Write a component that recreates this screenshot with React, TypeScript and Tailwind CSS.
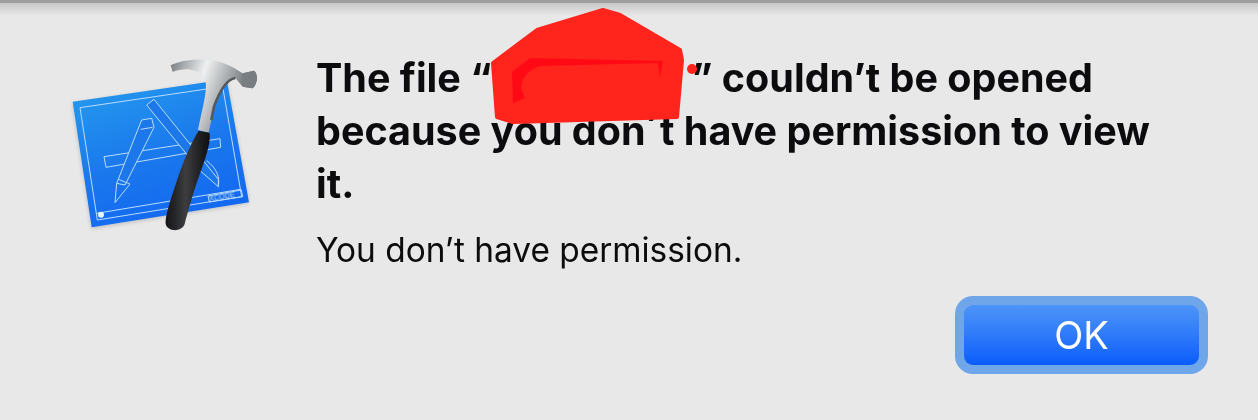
function XcodeIcon() {
  // traced in zoomed coordinates (3x)
  return (
    <svg width="230" height="200" viewBox="0 0 690 600" className="block">
      <defs>
        <linearGradient id="blue" x1="0.3" y1="0" x2="0.7" y2="1">
          <stop offset="0" stopColor="#2497ee" />
          <stop offset="0.5" stopColor="#1a78ec" />
          <stop offset="1" stopColor="#1266f2" />
        </linearGradient>
        <linearGradient id="steel" x1="0" y1="0" x2="1" y2="0.3">
          <stop offset="0" stopColor="#777c80" />
          <stop offset="0.4" stopColor="#eef0f1" />
          <stop offset="1" stopColor="#54595d" />
        </linearGradient>
        <linearGradient id="handle" x1="0" y1="0" x2="1" y2="0">
          <stop offset="0" stopColor="#141416" />
          <stop offset="0.45" stopColor="#3c3d40" />
          <stop offset="1" stopColor="#0d0d0f" />
        </linearGradient>
        <filter id="blur" x="-10%" y="-10%" width="120%" height="120%">
          <feGaussianBlur stdDeviation="1.5" />
        </filter>
        <filter id="shadow" x="-10%" y="-10%" width="120%" height="120%">
          <feGaussianBlur stdDeviation="6" />
        </filter>
      </defs>
      <polygon points="68,190 530,122 597,490 125,566" fill="#000" opacity="0.18" filter="url(#shadow)" />
      <polygon points="68,185 530,118 597,487 125,562" fill="url(#blue)" />
      <g fill="none" stroke="#b9dcfb" strokeWidth="3" filter="url(#blur)">
        <polygon points="90,203 518,140 575,470 142,540" />
        <path d="M140 520 L572 448" />
        <polygon points="474,468 574,450 578,470 478,486" />
        <polygon points="162,350 510,296 512,322 168,382" />
        <path d="M290 195 L312 178 L505 418 L505 440 L450 392 Z" fill="#1b78ea" />
        <path d="M470 362 C500 385 510 410 505 440" />
        <polygon points="275,240 305,235 312,262 225,435 200,430" fill="#1b78ea" />
        <path d="M200 430 L195 488 L240 432 M272 268 L308 262 M205 418 L240 432" />
      </g>
      <circle cx="153" cy="524" r="9" fill="#e8f4ff" filter="url(#blur)" />
      <text x="478" y="483" fontFamily="Liberation Sans, sans-serif" fontSize="22" fill="#b9dcfb" transform="rotate(-9 478 483)" filter="url(#blur)">XCODE</text>
      <g filter="url(#blur)">
        <path d="M362 76 C405 52 500 50 552 84 L578 100 L612 92 C624 100 624 130 608 145 L578 140 L556 114 C530 118 510 150 492 200 L476 278 L444 270 C458 200 478 135 462 108 C440 85 400 82 368 96 Z" fill="url(#steel)" />
        <path d="M578 100 L612 92 C624 100 624 130 608 145 L578 140 Z" fill="#787d81" />
        <path d="M556 114 C530 118 510 150 492 200 L484 240" fill="none" stroke="#55595d" strokeWidth="8" />
        <path d="M446 272 L478 278 C484 300 470 345 452 395 C430 455 412 520 404 552 C396 576 356 576 348 555 C342 535 365 470 388 400 C408 345 428 300 446 272 Z" fill="url(#handle)" />
      </g>
    </svg>
  );
}

export default function App() {
  return (
    <div className="relative h-[420px] w-[1258px] overflow-hidden bg-[#e8e8e8] font-['Inter','Liberation_Sans',sans-serif] text-[#0c0c0e]">
      <div className="h-[3px] bg-[#9e9e9e]" />
      <div className="h-[13px] bg-gradient-to-b from-[#c8c8c8] to-[#e8e8e8]" />

      <div className="flex pt-[24px] pl-[50px]">
        <div className="w-[266px] shrink-0">
          <XcodeIcon />
        </div>
        <div className="w-[900px] pt-[12px]">
          <h1 className="text-[39.5px] leading-[53px] font-bold blur-[0.4px]">
            The file “<span className="inline-block w-[200px]" />” couldn’t be opened
            <br />
            because you don´t have permission to view
            <br />
            it.
          </h1>
          <p className="mt-[19px] text-[33.4px] leading-[40px] blur-[0.4px]">You don’t have permission.</p>
        </div>
      </div>

      <div className="flex justify-end pr-[50px] pt-[26px]">
        <button className="flex h-[78px] w-[253px] items-center justify-center rounded-[18px] bg-[#6fa6ea] p-[9px]">
          <span className="flex h-full w-full items-center justify-center rounded-[9px] bg-gradient-to-b from-[#4d94f8] to-[#0a5cfb] text-[38px] text-white blur-[0.3px]">
            OK
          </span>
        </button>
      </div>

      {/* red scribble over the file name */}
      <svg width="1258" height="420" className="absolute top-0 left-0">
        <path
          d="M493 63 L537 30 L603 10 L620 15 L680 50 L682 60 L677 117 L513 122 L497 117 Z"
          fill="#ff241c"
          stroke="#ff241c"
          strokeWidth="4"
          strokeLinejoin="round"
        />
        <path
          d="M512 72 L530 58 L663 61 L660 78 L658 63 L540 66 Q522 72 521 88 L525 98 L513 103 Z"
          fill="#ff0a14"
        />
        <circle cx="692" cy="69" r="5" fill="#ff241c" />
      </svg>
    </div>
  );
}
